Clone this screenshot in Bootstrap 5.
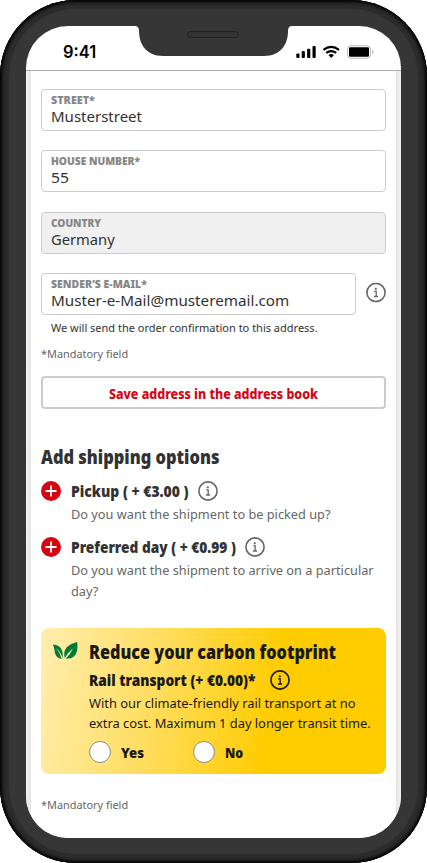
<!DOCTYPE html>
<html lang="en">
<head>
<meta charset="utf-8">
<meta name="viewport" content="width=device-width, initial-scale=1">
<title>Shipping address</title>
<link rel="stylesheet" href="https://cdn.jsdelivr.net/npm/bootstrap@5.3.0/dist/css/bootstrap.min.css">
<style>
body{width:427px;height:863px;overflow:hidden;background:#fff;font-family:"Noto Sans",sans-serif;color:#323232}
.phone{width:427px;height:863px;padding:26px;border-radius:76px;background:#363636;box-shadow:inset 0 0 2px 2px #080808,inset 0 0 4px 5px #222,inset 0 0 0 7.5px #303030,inset 0 0 1px 8.5px #2a2a2a}
.screen{width:375px;height:812px;border-radius:42px;background:#fff}
.status{height:45px;border-bottom:1px solid #aaa;padding:17px 27px 0 37px}
.clock{font:600 17px/18px Inter,sans-serif;color:#000}
.clock .t{--s:.97}
.notch{left:106px;top:-1px}
.page-body{height:767px;padding:18px 15px 0;background:linear-gradient(90deg,#f3f3f3 0,#e3e3e3 5px,#fff 5px,#fff 370px,#e3e3e3 370px,#f3f3f3 375px)}
.field{height:42px;border:1px solid #ccc;border-radius:4px;padding:3px 9px 0;margin-bottom:19.3px}
.field.off{background:#f0f0f0}
.cap{font-size:11px;line-height:14px;font-weight:900;color:#868686}
.val{font-size:15px;line-height:19px}
.t{display:inline-block;white-space:nowrap;transform-origin:0 50%;transform:scaleX(var(--s,1))}
.save{height:33px;border:2px solid #ccc;border-radius:4px;color:#d40511;font-weight:800;font-size:14px;line-height:32px}
.save .t{transform-origin:50% 50%}
.note{font-size:11px;line-height:16px;color:#666}
.hl{font-size:19px;line-height:28px;font-weight:900}
.opt{font-size:16px;line-height:22px;font-weight:900;padding-top:1px}
.desc{font-size:13px;line-height:21px;color:#666}
.desc .t{--s:.981}
.eco{height:146px;border-radius:8px;background:linear-gradient(100deg,#ffeeb0 0%,#ffdc58 36%,#fc0 67%);color:#191919;padding:10px 12px 0}
.eco .desc{line-height:20px;color:#191919}
.eco .desc .t{--s:.99}
.dot{width:22px;height:22px;border:1px solid #8c8c8c;border-radius:50%;background:#fff}
svg{display:block;flex:none}
</style>
<script src="https://cdn.jsdelivr.net/npm/bootstrap@5.3.0/dist/js/bootstrap.bundle.min.js"></script>
</head>
<body>
<svg width="0" height="0" class="position-absolute">
<symbol id="info" viewBox="0 0 20 20"><circle cx="10" cy="10" r="9.1" fill="none" stroke="currentColor" stroke-width="1.6"/><circle cx="9.8" cy="6.300" r="1.1" fill="currentColor"/><path d="M8.200 8.900h2v4.800M8 14h4" fill="none" stroke="currentColor" stroke-width="1.3"/></symbol>
<symbol id="plus" viewBox="0 0 20 20"><circle cx="10" cy="10" r="10" fill="#d40511"/><path d="M10 4.500v11M4.500 10h11" stroke="#fff" stroke-width="1.8"/></symbol>
</svg>
<div class="phone">
<div class="screen overflow-hidden position-relative">
  <svg class="notch position-absolute" width="163" height="32" viewBox="0 0 163 32"><path d="M0 0v1h3Q7 1 7 6C7 20 15 31 31 31H132C148 31 156 20 156 6Q156 1 160 1h3V0z" fill="#363636"/><rect x="55.500" y="6.500" width="51" height="6" rx="3" fill="#333" stroke="#202020"/></svg>
  <header class="status d-flex justify-content-between">
    <span class="clock"><span class="t">9:41</span></span>
    <svg width="80" height="18" viewBox="0 0 80 18"><g fill="#000"><rect x="2.300" y="10.500" width="3.200" height="4.500" rx="1"/><rect x="7.700" y="8" width="3.200" height="7" rx="1"/><rect x="13.100" y="5.800" width="3.200" height="9.200" rx="1"/><rect x="18.500" y="3" width="3.200" height="12" rx="1"/><path d="M34.500 12L37.200 14.900L39.900 12Q37.200 10.200 34.500 12z"/><rect x="55" y="4.300" width="20" height="9.500" rx="1.200"/></g><path d="M29.400 6.800Q37.200 .800 45 6.800M32.200 9.900Q37.200 6.200 42.200 9.900" fill="none" stroke="#000" stroke-width="2.200"/><rect x="53.400" y="2.800" width="23.200" height="12.400" rx="3.300" fill="none" stroke="#bbb"/><path d="M78 7v4q1.500-.6 1.500-2t-1.500-2z" fill="#bbb"/></svg>
  </header>
  <main class="page-body">
    <div class="field"><div class="cap"><span class="t" style="--s:.98">STREET*</span></div><div class="val"><span class="t">Musterstreet</span></div></div>
    <div class="field"><div class="cap"><span class="t" style="--s:.93">HOUSE NUMBER*</span></div><div class="val"><span class="t" style="--s:1.05">55</span></div></div>
    <div class="field off"><div class="cap"><span class="t" style="--s:.92">COUNTRY</span></div><div class="val"><span class="t" style="--s:.98">Germany</span></div></div>
    <div class="d-flex justify-content-between">
      <div class="field mb-0" style="width:315px"><div class="cap"><span class="t" style="--s:.955">SENDER’S E-MAIL*</span></div><div class="val"><span class="t" style="--s:1.015">Muster-e-Mail@musteremail.com</span></div></div>
      <svg class="mt-2" width="20" height="24" color="#666"><use href="#info" y="1.500" width="20" height="20"/></svg>
    </div>
    <div class="note mt-1 ms-2" style="color:#323232"><span class="t" style="margin:1px 0 0 2px">We will send the order confirmation to this address.</span></div>
    <div class="note" style="margin-top:10px"><span class="t" style="--s:.99">*Mandatory field</span></div>
    <div class="save text-center" style="margin-top:14px"><span class="t" style="--s:.89">Save address in the address book</span></div>
    <h2 class="hl mb-0" style="margin-top:34px"><span class="t" style="--s:.865">Add shipping options</span></h2>
    <div class="d-flex align-items-center" style="margin-top:9px;height:22px"><svg width="20" height="20" class="me-2"><use href="#plus"/></svg><div class="opt" style="width:117px;margin-left:2px"><span class="t" style="--s:.87">Pickup ( + €3.00 )</span></div><svg width="20" height="20" color="#666" style="margin-left:10px"><use href="#info"/></svg></div>
    <div class="desc" style="margin:2px 0 0 30px"><span class="t">Do you want the shipment to be picked up?</span></div>
    <div class="d-flex align-items-center" style="margin-top:11px;height:22px"><svg width="20" height="20" class="me-2"><use href="#plus"/></svg><div class="opt" style="width:165px;margin-left:2px"><span class="t" style="--s:.857">Preferred day ( + €0.99 )</span></div><svg width="20" height="20" color="#666" style="margin-left:9px"><use href="#info"/></svg></div>
    <div class="desc" style="margin:2px 0 0 30px"><span class="t">Do you want the shipment to arrive on a particular</span><br><span class="t">day?</span></div>
    <section class="eco d-flex" style="margin-top:26px">
      <svg width="26" height="20" viewBox="0 0 26 20" class="mt-1"><path d="M0 2.500Q7 3 9 8.500Q10.200 12 9.700 16.800Q8.500 11 3.200 6Q7 10.500 8.700 17Q3 16 2 11Q1.500 7 0 2.500z" fill="#007c39"/><path d="M24.200 0Q25.500 10 21 14.500Q18 17 12.800 16.800Q17.500 12 20 6.300Q15.500 10 11.800 16Q10 9 14 5Q17.500 1.500 24.200 0z" fill="#007c39"/></svg>
      <div style="margin-left:10px">
        <div class="hl" style="height:28px"><span class="t" style="--s:.854">Reduce your carbon footprint</span></div>
        <div class="d-flex align-items-center" style="height:28px"><div class="opt" style="width:181px"><span class="t" style="--s:.857">Rail transport (+ €0.00)*</span></div><svg width="20" height="20" color="#191919"><use href="#info"/></svg></div>
        <div class="desc" style="margin-top:-1px"><span class="t">With our climate-friendly rail transport at no</span><br><span class="t">extra cost. Maximum 1 day longer transit time.</span></div>
        <div class="d-flex align-items-center" style="height:38px"><i class="dot"></i><div class="opt" style="width:72px;margin-left:10px;font-size:14px;padding-top:2px"><span class="t" style="--s:.94">Yes</span></div><i class="dot"></i><div class="opt" style="margin-left:10px;font-size:14px;padding-top:2px"><span class="t" style="--s:.88">No</span></div></div>
      </div>
    </section>
    <div class="note" style="margin-top:23px"><span class="t" style="--s:.99">*Mandatory field</span></div>
  </main>
</div>
</div>
</body>
</html>
